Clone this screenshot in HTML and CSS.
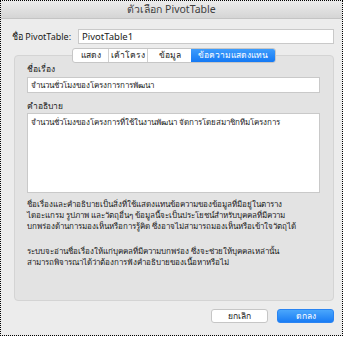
FILE: index.html
```html
<!DOCTYPE html>
<html>
	<head>
		<meta charset="UTF-8">
		<title>ตัวเลือก PivotTable</title>
		<link rel="stylesheet" href="styles.css">
	</head>
	<body>
		<div id="dialog">
			<!--标题栏-->
			<div class="titlebar">ตัวเลือก PivotTable</div>

			<div class="main">
				<!--名称-->
				<div class="name-row">
					<span class="name-label">ชื่อ PivotTable:</span>
					<div class="field name-field">PivotTable1</div>
				</div>

				<!--选项卡-->
				<div class="group">
					<div class="tabs">
						<span class="tab t1">แสดง</span>
						<span class="tab t2">เค้าโครง</span>
						<span class="tab t3">ข้อมูล</span>
						<span class="tab t4 active">ข้อความแสดงแทน</span>
					</div>

					<div class="group-body">
						<p class="label">ชื่อเรื่อง</p>
						<div class="field title-field">จำนวนชั่วโมงของโครงการการพัฒนา</div>

						<p class="label">คำอธิบาย</p>
						<div class="field desc-field">จำนวนชั่วโมงของโครงการที่ใช้ในงานพัฒนา จัดการโดยสมาชิกทีมโครงการ</div>

						<p class="note">ชื่อเรื่องและคำอธิบายเป็นสิ่งที่ใช้แสดงแทนข้อความของข้อมูลที่มีอยู่ในตาราง<br>ไดอะแกรม รูปภาพ และวัตถุอื่นๆ ข้อมูลนี้จะเป็นประโยชน์สำหรับบุคคลที่มีความ<br>บกพร่องด้านการมองเห็นหรือการรู้คิด ซึ่งอาจไม่สามารถมองเห็นหรือเข้าใจวัตถุได้</p>
						<p class="note">ระบบจะอ่านชื่อเรื่องให้แก่บุคคลที่มีความบกพร่อง ซึ่งจะช่วยให้บุคคลเหล่านั้น<br>สามารถพิจารณาได้ว่าต้องการฟังคำอธิบายของเนื้อหาหรือไม่</p>
					</div>
				</div>

				<!--按钮-->
				<div class="buttons">
					<a href="#" class="btn">ยกเลิก</a>
					<a href="#" class="btn primary">ตกลง</a>
				</div>
			</div>
		</div>
	</body>
</html>
```
FILE: styles.css
```css
*{
	margin: 0;
	padding: 0;
	box-sizing: border-box;
}
body{
	background: #fff;
	font-family: "Noto Sans", "DejaVu Sans", sans-serif;
	font-size: 8.5px;
	color: #1a1a1a;
}
#dialog{
	width: 343px;
	height: 336px;
	border: 1px dotted #000;
	background: #ececec;
}
.titlebar{
	height: 18px;
	line-height: 17px;
	text-align: center;
	font-size: 10.5px;
	color: #3f3f3f;
	background: linear-gradient(#ebebeb, #d5d5d5);
	border-bottom: 1px solid #c4c4c4;
	white-space: nowrap;
}
.main{
	padding: 10px 8px 0 11px;
}
.name-row{
	display: flex;
	align-items: center;
	height: 15px;
}
.name-label{
	flex: none;
	width: 66px;
	font-size: 9px;
	white-space: nowrap;
}
.field{
	background: #fff;
	border: 1px solid #c9c9c9;
	font-size: 8px;
	line-height: 13px;
	padding: 0 3px;
	white-space: nowrap;
	overflow: hidden;
}
.name-field{
	flex: 1;
	height: 15px;
	font-size: 9.5px;
}
.group{
	margin: 11px 0 0 2px;
	height: 246px;
	background: #e3e3e3;
	border: 1px solid #d4d4d4;
	border-radius: 4px;
	position: relative;
}
.tabs{
	display: flex;
	position: absolute;
	top: -8px;
	left: 57px;
	border: 1px solid #c6c6c6;
	border-radius: 3px;
	background: #fff;
	overflow: hidden;
	white-space: nowrap;
}
.tab{
	height: 13px;
	line-height: 12px;
	text-align: center;
	font-size: 8.5px;
	border-left: 1px solid #d0d0d0;
}
.tab:first-child{
	border-left: none;
}
.t1{ width: 35px; }
.t2{ width: 39px; }
.t3{ width: 44px; }
.t4{ width: 84px; }
.tab.active{
	background: linear-gradient(#3d9cfc, #1479f4);
	color: #fff;
	border-left: none;
}
.group-body{
	padding: 6px 13px 0 12px;
}
.label{
	font-size: 8.5px;
	line-height: 14px;
	white-space: nowrap;
}
.title-field{
	height: 16px;
	margin: 1px 0 6px;
}
.desc-field{
	height: 80px;
	padding-top: 1px;
}
.note{
	margin-top: 5px;
	font-size: 8px;
	line-height: 11px;
	white-space: nowrap;
}
.note + .note{
	margin-top: 14px;
}
.buttons{
	display: flex;
	justify-content: flex-end;
	gap: 9px;
	margin-top: 8px;
}
.btn{
	width: 57px;
	height: 14px;
	line-height: 12px;
	text-align: center;
	font-size: 8.5px;
	text-decoration: none;
	color: #1a1a1a;
	background: #fff;
	border: 1px solid #c6c6c6;
	border-radius: 3px;
}
.btn.primary{
	color: #fff;
	border-color: #2a84f2;
	background: linear-gradient(#4aa6fc, #1a7cf4);
}
```
